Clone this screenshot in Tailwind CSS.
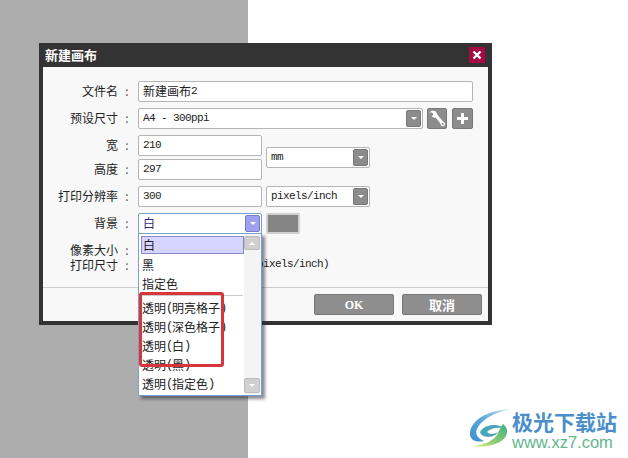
<!DOCTYPE html>
<html lang="zh">
<head>
	<meta charset="UTF-8">
	<title>新建画布</title>
	<script src="https://cdn.jsdelivr.net/npm/@tailwindcss/browser@4"></script>
</head>
<body class="relative w-[628px] h-[458px] overflow-hidden bg-white font-['Noto_Sans_CJK_SC',sans-serif] text-[12px] text-[#222]">
	<div class="absolute left-0 top-0 w-[248px] h-full bg-[#adadad]"></div>

	<!-- Dialog -->
	<div class="absolute left-[39px] top-[43px] w-[453px] h-[282px] border-x-4 border-b-4 border-[#333] bg-[#f8f8f8] flex flex-col">
		<div class="-mx-1 h-6 shrink-0 bg-[#333] flex items-center justify-between pl-[6px] pr-[7px]">
			<span class="text-[13px] font-bold text-white">新建画布</span>
			<span class="w-4 h-4 bg-[#a50a45] flex items-center justify-center">
				<svg class="w-[10px] h-[10px]" viewBox="0 0 10 10" fill="none" stroke="white" stroke-width="2.4"><path d="M1.5 1.5l7 7M8.5 1.5l-7 7"/></svg>
			</span>
		</div>

		<div class="flex-1 relative pl-[15px] pt-[14px] flex flex-col">
			<div class="flex items-center h-[21px]">
				<span class="w-[60px] text-right pb-[2px]">文件名</span><span class="w-[20px] text-center text-[#555] pr-[2px] pb-[2px]">:</span>
				<div class="w-[335px] h-full bg-white border border-[#b5b5b5] rounded-[2px] pl-1 flex items-center pb-[1px]">新建画布<span class="font-['Liberation_Mono',monospace] text-[11px] -tracking-[0.6px]">2</span></div>
			</div>
			<div class="flex items-center h-[21px] mt-[6px]">
				<span class="w-[60px] text-right pb-[2px]">预设尺寸</span><span class="w-[20px] text-center text-[#555] pr-[2px] pb-[2px]">:</span>
				<div class="w-[285px] h-full bg-white border border-[#b5b5b5] rounded-[2px] pl-1 pr-[1px] flex items-center justify-between font-['Liberation_Mono',monospace] text-[11px] -tracking-[0.6px]">
					<span>A4 - 300ppi</span>
					<span class="w-[15px] h-[17px] bg-[#8c8c8c] border border-[#777] rounded-[2px] flex items-center justify-center"><span class="w-0 h-0 border-x-[3px] border-t-[3px] border-x-transparent border-t-white"></span></span>
				</div>
				<span class="ml-1 w-[20px] h-full bg-[#8c8c8c] border border-[#777] rounded-[2px] flex items-center justify-center">
					<svg class="w-[18px] h-[19px]" viewBox="0 0 18 19" fill="none"><path d="M1 3.5 4 1.5 8 2.5 9.500 6 7 9 3.500 7.500 5.500 5.500 4 3.500Z" fill="white"/><path d="M8 6.500 14.500 14.500" stroke="white" stroke-width="3.200"/><circle cx="14.800" cy="15" r="1.700" fill="#8c8c8c" stroke="white" stroke-width="1.300"/></svg>
				</span>
				<span class="ml-[5px] w-[21px] h-full bg-[#8c8c8c] border border-[#777] rounded-[2px] flex items-center justify-center">
					<svg class="w-[11px] h-[11px]" viewBox="0 0 11 11" fill="white"><path d="M4 0h3v4h4v3H7v4H4V7H0V4h4z"/></svg>
				</span>
			</div>
			<div class="flex h-[45px] mt-[6px]">
				<div class="flex flex-col gap-[3px]">
					<div class="flex items-center h-[21px]">
						<span class="w-[60px] text-right pb-[2px]">宽</span><span class="w-[20px] text-center text-[#555] pr-[2px] pb-[2px]">:</span>
						<div class="w-[124px] h-full bg-white border border-[#b5b5b5] rounded-[2px] pl-1 flex items-center font-['Liberation_Mono',monospace] text-[11px] -tracking-[0.6px]">210</div>
					</div>
					<div class="flex items-center h-[21px]">
						<span class="w-[60px] text-right pb-[2px]">高度</span><span class="w-[20px] text-center text-[#555] pr-[2px] pb-[2px]">:</span>
						<div class="w-[124px] h-full bg-white border border-[#b5b5b5] rounded-[2px] pl-1 flex items-center font-['Liberation_Mono',monospace] text-[11px] -tracking-[0.6px]">297</div>
					</div>
				</div>
				<div class="self-center ml-1 w-[104px] h-[21px] bg-white border border-[#b5b5b5] rounded-[2px] pl-1 pr-[1px] flex items-center justify-between font-['Liberation_Mono',monospace] text-[11px] -tracking-[0.6px]">
					<span>mm</span>
					<span class="w-[15px] h-[17px] bg-[#8c8c8c] border border-[#777] rounded-[2px] flex items-center justify-center"><span class="w-0 h-0 border-x-[3px] border-t-[3px] border-x-transparent border-t-white"></span></span>
				</div>
			</div>
			<div class="flex items-center h-[21px] mt-[6px]">
				<span class="w-[60px] text-right pb-[2px] whitespace-nowrap">打印分辨率</span><span class="w-[20px] text-center text-[#555] pr-[2px] pb-[2px]">:</span>
				<div class="w-[124px] h-full bg-white border border-[#b5b5b5] rounded-[2px] pl-1 flex items-center font-['Liberation_Mono',monospace] text-[11px] -tracking-[0.6px]">300</div>
				<div class="ml-1 w-[104px] h-full bg-white border border-[#b5b5b5] rounded-[2px] pl-1 pr-[1px] flex items-center justify-between font-['Liberation_Mono',monospace] text-[11px] -tracking-[0.6px]">
					<span>pixels/inch</span>
					<span class="w-[15px] h-[17px] bg-[#8c8c8c] border border-[#777] rounded-[2px] flex items-center justify-center"><span class="w-0 h-0 border-x-[3px] border-t-[3px] border-x-transparent border-t-white"></span></span>
				</div>
			</div>
			<div class="flex items-center h-[21px] mt-[6px]">
				<span class="w-[60px] text-right pb-[2px]">背景</span><span class="w-[20px] text-center text-[#555] pr-[2px] pb-[2px]">:</span>
				<div class="w-[124px] h-full bg-white border border-[#7aa0d0] rounded-[2px] pl-1 pr-[1px] flex items-center justify-between text-[#3a2a80]">
					<span class="pb-[2px]">白</span>
					<span class="w-[15px] h-[17px] bg-[#a0a0f0] border border-[#7a7ac8] rounded-[2px] flex items-center justify-center"><span class="w-0 h-0 border-x-[3px] border-t-[3px] border-x-transparent border-t-white"></span></span>
				</div>
				<div class="ml-1 w-[34px] h-full bg-[#858585] border-2 border-[#d0d0d0] rounded-[2px]"></div>
			</div>
			<div class="flex items-center h-[15px] mt-[8px] leading-[15px]">
				<span class="w-[60px] text-right">像素大小</span><span class="w-[20px] text-center text-[#555] pr-[2px]">:</span>
			</div>
			<div class="flex items-center h-[15px] leading-[15px]">
				<span class="w-[60px] text-right">打印尺寸</span><span class="w-[20px] text-center text-[#555] pr-[2px]">:</span>
				<span class="w-[191px] text-right font-['Liberation_Mono',monospace] text-[11px] -tracking-[0.6px]">(300 pixels/inch)</span>
			</div>

			<div class="mt-auto -ml-[15px] border-t border-[#ccc] h-[34px] flex items-start justify-end gap-2 pt-[6px] pr-[6px]">
				<button class="w-[80px] h-[21px] bg-[#8e8e8e] border border-[#777] rounded-[2px] text-white font-bold font-['Liberation_Serif',serif] text-[12px]">OK</button>
				<button class="w-[80px] h-[21px] bg-[#8e8e8e] border border-[#777] rounded-[2px] text-white font-bold text-[13px] leading-none">取消</button>
			</div>
		</div>
	</div>

	<!-- Open background list -->
	<div class="absolute left-[138px] top-[233px] w-[124px] h-[163px] bg-white border border-[#7aa0d0] shadow-[3px_3px_3px_rgba(40,40,60,0.55)] flex text-[12px]">
		<div class="flex-1 pt-[2px] pl-[2px]">
			<div class="h-[18px] bg-[#d5d5ff] border border-[#8a8ac8] pl-[1px] flex items-center leading-none">白</div>
			<div class="h-[19px] pl-[1px] mt-[1px] flex items-center">黑</div>
			<div class="h-[19px] pl-[1px] flex items-center">指定色</div>
			<div class="border-t border-[#ccc] mt-[2px] mb-[2px] mr-[1px]"></div>
			<div class="h-[19px] pl-[1px] flex items-center whitespace-nowrap">透明<span class="font-['Liberation_Mono',monospace] -tracking-[1.2px]">(</span>明亮格子<span class="font-['Liberation_Mono',monospace] -tracking-[1.2px]">)</span></div>
			<div class="h-[19px] pl-[1px] flex items-center whitespace-nowrap">透明<span class="font-['Liberation_Mono',monospace] -tracking-[1.2px]">(</span>深色格子<span class="font-['Liberation_Mono',monospace] -tracking-[1.2px]">)</span></div>
			<div class="h-[19px] pl-[1px] flex items-center whitespace-nowrap">透明<span class="font-['Liberation_Mono',monospace] -tracking-[1.2px]">(</span>白<span class="font-['Liberation_Mono',monospace] -tracking-[1.2px]">)</span></div>
			<div class="h-[19px] pl-[1px] flex items-center whitespace-nowrap">透明<span class="font-['Liberation_Mono',monospace] -tracking-[1.2px]">(</span>黑<span class="font-['Liberation_Mono',monospace] -tracking-[1.2px]">)</span></div>
			<div class="h-[19px] pl-[1px] flex items-center whitespace-nowrap">透明<span class="font-['Liberation_Mono',monospace] -tracking-[1.2px]">(</span>指定色<span class="font-['Liberation_Mono',monospace] -tracking-[1.2px]">)</span></div>
		</div>
		<div class="w-[17px] py-[2px] pr-[1px] bg-[#f4f4f4] flex flex-col justify-between">
			<span class="h-[14px] bg-[#d0d0d0] border border-[#bbb] rounded-[2px] flex items-center justify-center"><span class="w-0 h-0 border-x-[3px] border-b-[3px] border-x-transparent border-b-white"></span></span>
			<span class="h-[15px] bg-[#d0d0d0] border border-[#bbb] rounded-[2px] flex items-center justify-center"><span class="w-0 h-0 border-x-[3px] border-t-[3px] border-x-transparent border-t-white"></span></span>
		</div>
	</div>

	<!-- Red annotation -->
	<div class="absolute left-[139px] top-[292px] w-[85px] h-[75px] border-[3px] border-[#d8363a] rounded-[3px]"></div>

	<!-- Watermark -->
	<svg class="absolute left-[468px] top-[406px] w-[44px] h-[44px]" viewBox="0 0 44 44">
		<defs>
			<linearGradient id="swirlBlue" x1="1" y1="0" x2="0" y2="1"><stop offset="0" stop-color="#cfe6ee"/><stop offset="0.5" stop-color="#5aa8d8"/><stop offset="1" stop-color="#3f8fd0"/></linearGradient>
			<linearGradient id="swirlGreen" x1="1" y1="0" x2="0" y2="1"><stop offset="0" stop-color="#3fae8c"/><stop offset="0.6" stop-color="#8fcf70"/><stop offset="1" stop-color="#f0e98a"/></linearGradient>
		</defs>
		<path d="M42 3C24 4 5 11 2 26C1 34 8 37 16 35C9 32 6 27 10 21C16 11 30 6 42 3Z" fill="url(#swirlBlue)"/>
		<path d="M12 26C16 18 30 17 36 22C30 21 22 22 19 26C22 29 27 28 30 26C27 32 14 33 12 26Z" fill="#48a6b8"/>
		<path d="M35 18C43 24 39 34 27 38C19 41 11 41 5 40C15 39 27 35 30 27C31 24 33 21 35 18Z" fill="url(#swirlGreen)"/>
	</svg>
	<div class="absolute left-[512px] top-[409px] flex flex-col items-start">
		<span class="text-[21px] font-bold text-[#4a8fcb] leading-[25px] whitespace-nowrap">极光下载站</span>
		<span class="font-['Liberation_Sans',sans-serif] text-[16.5px] text-[#5fb58c] leading-[16px] whitespace-nowrap">www.xz7.com</span>
	</div>
</body>
</html>
